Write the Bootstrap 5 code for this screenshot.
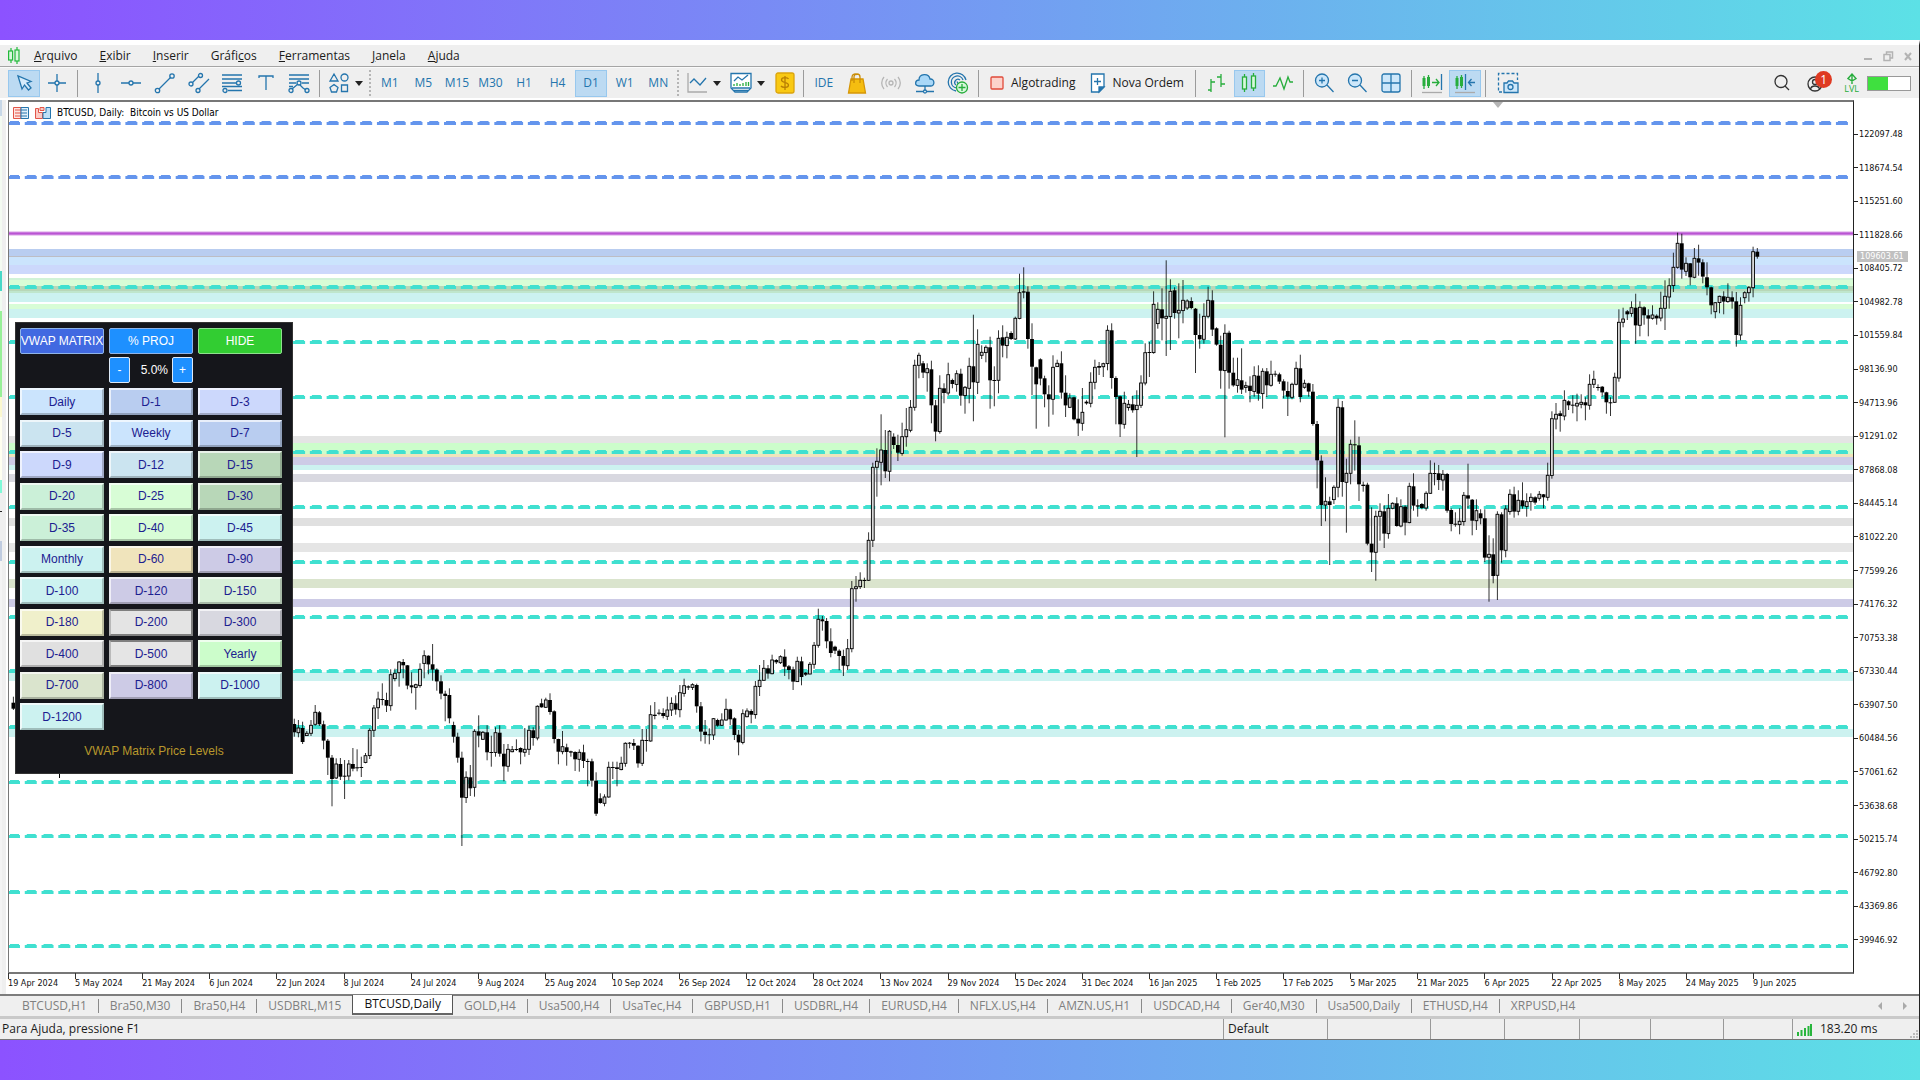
<!DOCTYPE html>
<html lang="pt-BR">
<head>
<meta charset="utf-8">
<meta name="viewport" content="width=device-width, initial-scale=1">
<title>BTCUSD,Daily</title>
<link href="https://cdn.jsdelivr.net/npm/bootstrap@5.3.0/dist/css/bootstrap.min.css" rel="stylesheet">
<style>
:root{--ui:"Open Sans","Noto Sans",sans-serif;--axis:"DejaVu Sans Condensed","DejaVu Sans",sans-serif;--blue:#2475ad;--face:#efefef}
body{font-family:var(--ui);font-size:12px;line-height:16px;color:#1b1b1b;min-height:100vh;background:#fff}
.band{height:40px;background:linear-gradient(90deg,#8c52ff,#5ce1e6)}
.app{border-top:5px solid #fff;border-right:1px solid #222}
.menubar{background:var(--face);height:22px;border-bottom:1px solid #a5a5a5;padding:0 5px 0 6px}
.menubar .menus{gap:22px;margin-left:12px}
.menubar a{color:#1b1b1b;text-decoration:none}
.winctl{gap:8px}
.winctl button{width:12px;height:12px;padding:0;border:0;background:none;display:flex}
.tools{background:var(--face);height:31px;border-top:1px solid #fafafa;padding-left:7px}
.grp{display:flex;height:27px}
.tb{flex:1 1 0;border:1px solid transparent;background:none;padding:0;margin:0 1px;color:var(--blue);display:flex;align-items:center;justify-content:center;font-size:12px;line-height:16px}
.tb.on{background:#bcdaf2;border-color:#98c8ee}
.tb svg,.txtbtn svg{width:22px;height:22px;flex:none;fill:none;stroke:var(--blue);stroke-width:1.3}
.txtbtn{border:0;background:none;padding:0;display:flex;align-items:center;font-size:12px;color:#1b1b1b;gap:3px}
.caret{width:13px;border:0;background:none;padding:0 3px 0 0;display:flex;align-items:center;justify-content:center}
.caret::after{content:"";border:4px solid transparent;border-top:5px solid #222;border-bottom:0}
.vsep{width:1px;height:27px;background:#9b9b9b;margin:0 3px}
.grip{width:2px;height:27px;margin:0 2px;background:repeating-linear-gradient(#b5b5b5 0 2px,transparent 2px 4px)}
.green{stroke:#27ad3c!important}
.w-2{width:67px}.w-3{width:101px}.w-5{width:168px}.w-7{width:235px}.w-9{width:302px}.w-1{width:31px}
.badge-n{left:14px;top:1px;width:17px;height:17px;border-radius:9px;background:#df3a22;color:#fff;font-size:12px;line-height:17px;text-align:center}
.lvl{color:#27ad3c;font-size:9px;line-height:10px}
.battery{width:44px;height:15px;border:1px solid #999;background:linear-gradient(90deg,#3fe03f 47%,#fff 47%)}
.work{border-top:2px solid #fff}
.dock{width:8px;background:
 linear-gradient(90deg,transparent 0 2px,#efefef 2px 6px,#fff 6px),
 linear-gradient(#c8d8e8 0 16px,#f4fbf2 16px 171px,#48d8c8 171px 191px,#f0fbf0 191px 211px,#98f098 211px 297px,#fbf8cf 297px 317px,#fffff0 317px 380px,#80fad8 380px 393px,#efefef 393px 411px,#222 411px 412px,#efefef 412px 441px,#c0cce0 441px 461px,#f4f4f4 461px)}
.plot{border:1px solid #222;border-top:2px solid #777;border-bottom:2px solid #777;border-left-color:#777;min-height:500px}
.plot svg.chart{position:absolute;inset:0;width:100%;height:100%}
.plot-title{left:4px;top:3px;font-family:var(--axis);font-size:10px;gap:6px;color:#000}
.shift-mark{right:350px;top:0;border:5px solid transparent;border-top:6px solid #b5b5b5;border-bottom:0}
.prices{width:65px;padding:28px 0 48px;font:9px/12px var(--axis);color:#111}
.prices span{display:flex;align-items:center;gap:1px}
.prices span::before{content:"";width:4px;height:1px;background:#222}
.now{left:3px;top:151px;width:51px;background:#c0c0c0;color:#fff;font:9px/11px var(--axis);padding-left:3px}
.dates{display:grid;grid-template-columns:repeat(27,1fr);padding:0 34px 0 0;height:20px;font:9px/12px var(--axis);color:#111}
.dates span{white-space:nowrap;padding-top:3px;position:relative;width:0}
.dates span::before{content:"";position:absolute;left:0;top:-1px;width:1px;height:6px;background:#333}
.panel{left:6px;top:220px;width:278px;height:452px;background:#15161b;border:1px solid #333;padding:5px 4px 4px;font-family:"Liberation Sans",Arial,sans-serif;font-size:12px}
.panel button{font-size:12px;line-height:14px;padding:0;height:27px;white-space:nowrap;overflow:hidden}
.cols{display:grid;grid-template-columns:repeat(3,84px);column-gap:5px}
.head button{height:26px;color:#fff;border:1px solid #8fb4e8;border-radius:2px;display:flex;justify-content:center;align-items:center}
.head .hide{border-color:#8ee08e}
.head .step{width:21px;border-color:#dce9f8}
.steprow{margin-top:3px}
.levels{height:342px;align-content:space-between;margin-top:5px}
.levels button{border:2px solid;border-color:#ffffffb0 #00000038 #00000038 #ffffffb0;color:#1c2090}
.levels button.in{border-color:#00000070 #00000070 #00000070 #00000030}
.panel-foot{color:#b8982c;margin-top:13px}
.tabsrow{background:var(--face);border-top:2px solid #7d7d7d;height:22px;padding-left:11px}
.tabsrow a{color:#808080;text-decoration:none;padding:0 11px;height:14px;line-height:14px;border-right:1px solid #8a8a8a}
.tabsrow a:last-of-type{border:0}
.tabsrow a.now-tab{background:#fff;color:#111;height:20px;line-height:18px;margin:-2px 0 0 -1px;padding:0 11px;border:1px solid #555;border-top:0;border-bottom:2px solid #666}
.statusrow{background:var(--face);border-top:3px solid #c9c9c9;border-bottom:1px solid #777;height:24px;padding-left:2px}
.statusrow .cell{border-left:1px solid #999;height:20px;line-height:20px}
</style>
<script src="https://cdn.jsdelivr.net/npm/bootstrap@5.3.0/dist/js/bootstrap.bundle.min.js"></script>
</head>
<body class="d-flex flex-column">
<div class="band"></div>
<div class="app d-flex flex-column flex-grow-1">

<header class="menubar d-flex align-items-center">
 <svg width="16" height="18" viewBox="0 0 16 18" fill="#d9f7dc" stroke="#22b93a" stroke-width="1.2"><path d="M5 1v3M5 13v3M11 0v3M11 14v3"/><rect x="2.6" y="4" width="4" height="9"/><rect x="9" y="3" width="4" height="11"/></svg>
 <nav class="menus d-flex">
  <a href="#"><u>A</u>rquivo</a><a href="#"><u>E</u>xibir</a><a href="#"><u>I</u>nserir</a><a href="#">Gráfi<u>c</u>os</a><a href="#"><u>F</u>erramentas</a><a href="#"><u>J</u>anela</a><a href="#"><u>A</u>juda</a>
 </nav>
 <div class="winctl d-flex ms-auto">
  <button aria-label="Minimizar"><svg width="12" height="12" stroke="#b3b3b3" stroke-width="2"><path d="M2 9h8"/></svg></button>
  <button aria-label="Restaurar"><svg width="12" height="12" fill="none" stroke="#b3b3b3" stroke-width="1.5"><path d="M2 4.500h6v6H2zM4.500 4V2h6v6H8"/></svg></button>
  <button aria-label="Fechar"><svg width="12" height="12" stroke="#b3b3b3" stroke-width="2"><path d="M3 3l6 7M9 3l-6 7"/></svg></button>
 </div>
</header>

<div class="tools d-flex align-items-center">
 <div class="grp w-2">
  <button class="tb on" aria-label="Cursor"><svg viewBox="0 0 22 22"><path fill="#d5ebfb" d="M5 4l4 13 2.500-4 4 5 2.500-2-4-5 4-1.500z"/></svg></button>
  <button class="tb" aria-label="Mira"><svg viewBox="0 0 22 22"><path d="M11 2v7M11 13v7M2 11h7M13 11h7"/><circle cx="11" cy="11" r="2"/></svg></button>
 </div><i class="vsep"></i>
 <div class="grp w-7">
  <button class="tb" aria-label="Linha vertical"><svg viewBox="0 0 22 22"><path d="M11 1v8M11 13v8"/><circle cx="11" cy="11" r="2"/></svg></button>
  <button class="tb" aria-label="Linha horizontal"><svg viewBox="0 0 22 22"><path d="M1 11h8M13 11h8"/><circle cx="11" cy="11" r="2"/></svg></button>
  <button class="tb" aria-label="Tendência"><svg viewBox="0 0 22 22"><path d="M5 17L17 5"/><circle cx="18" cy="4" r="2.200"/><circle cx="3.500" cy="18.500" r="2.200"/></svg></button>
  <button class="tb" aria-label="Canal"><svg viewBox="0 0 22 22"><path d="M4 11L11 4M11 17L21 7"/><circle cx="12.500" cy="3.500" r="2"/><circle cx="3" cy="12" r="2"/><circle cx="10" cy="18.500" r="2"/></svg></button>
  <button class="tb" aria-label="Fibonacci"><svg viewBox="0 0 22 22"><path d="M1 3h20M1 7h20M1 11h14M1 14.500h20M7 18.500h14"/><circle cx="17.500" cy="11" r="2"/><circle cx="4" cy="18.500" r="2"/></svg></button>
  <button class="tb" aria-label="Texto"><svg viewBox="0 0 22 22"><path d="M4 6V4h14v2M11 4v14"/></svg></button>
  <button class="tb" aria-label="Elliott"><svg viewBox="0 0 22 22"><path d="M1 3h20M1 7h20M1 11h7M14 11h7M4 17l6-5M12 13l3 3 3 2M1 14.500h4"/><circle cx="11" cy="11" r="2"/><circle cx="3" cy="18.500" r="2"/><circle cx="19" cy="18.500" r="2"/></svg></button>
 </div><i class="vsep"></i>
 <div class="grp w-1"><button class="tb" aria-label="Formas"><svg viewBox="0 0 22 22"><path d="M6 2l4 7H2zM6 12.500l4 3-1.500 4.500h-5L2 15.500zM13.500 13h6v6.500h-6z"/><circle cx="16.500" cy="5.500" r="3.500"/></svg></button></div>
 <button class="caret" aria-label="Mais formas"></button>
 <i class="grip"></i>
 <div class="grp w-9">
  <button class="tb">M1</button><button class="tb">M5</button><button class="tb">M15</button><button class="tb">M30</button><button class="tb">H1</button><button class="tb">H4</button><button class="tb on">D1</button><button class="tb">W1</button><button class="tb">MN</button>
 </div>
 <i class="grip"></i>
 <div class="grp w-1"><button class="tb" aria-label="Tipo de gráfico"><svg viewBox="0 0 22 22"><path stroke="#aaa" d="M2 1v19h19"/><path d="M4 11l4-4 6 6 6-7"/></svg></button></div>
 <button class="caret" aria-label="Opções"></button>
 <div class="grp w-1"><button class="tb" aria-label="Indicadores"><svg viewBox="0 0 22 22"><path fill="#fff" d="M1 1.500h20V16l-4 4H5l-4-4z"/><path d="M4 9l4-4 4 3 6-5M2 16h18M4 18.500h14"/><path class="green" d="M4 14v-2M7 14v-3M10 14v-2M13 14v-3M16 14v-4M18.500 14v-4"/></svg></button></div>
 <button class="caret" aria-label="Opções"></button>
 <div class="grp w-1"><button class="tb" aria-label="Depósito"><svg viewBox="0 0 22 22"><rect x="2" y="1" width="18" height="20" rx="2" fill="#f9c913" stroke="#dba40c"/><path stroke="#b87e04" d="M14.500 7c-1-1.800-7-2-7 1s7 2 7 5-6 3-7.500 1M11 4v14"/></svg></button></div>
 <i class="vsep"></i>
 <div class="grp w-5">
  <button class="tb">IDE</button>
  <button class="tb" aria-label="Loja"><svg viewBox="0 0 22 22"><path fill="#f5bd10" stroke="#d69606" d="M5 7h12l2.500 14h-17z"/><path stroke="#c98d08" d="M8 11V5c0-4 6-4 6 0v6M6 9V5c0-3 4-4 5-2"/></svg></button>
  <button class="tb" aria-label="Sinais"><svg viewBox="0 0 22 22" style="stroke:#b5b5b5"><circle cx="11" cy="11" r="2"/><path d="M7.500 7a6 6 0 000 8M14.500 7a6 6 0 010 8M4 5a9 9 0 000 12M18 5a9 9 0 010 12"/></svg></button>
  <button class="tb" aria-label="Nuvem"><svg viewBox="0 0 22 22"><path fill="#a9d8f8" d="M5 14c-5 0-4-6 0-6 0-7 10-7 11-1 5-.5 5 7 1 7z"/><path d="M11 14v5M2 19.500h18"/><circle cx="11" cy="19.500" r="1.500" fill="#fff"/></svg></button>
  <button class="tb" aria-label="VPS"><svg viewBox="0 0 22 22"><path d="M9 19A9 9 0 1119 8M10 16a6 6 0 116-8M9 13a3 3 0 114-5M10 9.500l2 4"/><circle cx="15" cy="15.500" r="5.500" fill="#d8f8dc" class="green"/><path class="green" d="M15 12v7M11.500 15.500h7"/></svg></button>
 </div><i class="vsep"></i>
 <button class="txtbtn ms-1"><svg viewBox="0 0 22 22"><rect x="5" y="5" width="12" height="12" rx="1" fill="#fcd2cb" stroke="#e04a3a"/></svg>Algotrading</button>
 <button class="txtbtn ms-2 me-2 ps-1"><svg viewBox="0 0 22 22"><path fill="#fff" d="M4.500 2h12.500v13l-5 5H4.500z"/><path fill="#2475ad" d="M12 20v-5h5z"/><path d="M10.500 6v7M7 9.500h7"/></svg>Nova Ordem</button>
 <i class="vsep"></i>
 <div class="grp w-3">
  <button class="tb" aria-label="Barras"><svg class="green" viewBox="0 0 22 22"><path d="M6 7v13M6 10h4M3 18h3M16 2v13M12 5h4M16 12h4"/></svg></button>
  <button class="tb on" aria-label="Velas"><svg class="green" viewBox="0 0 22 22"><path d="M6.500 2v3M6.500 17v3M15.500 1v3M15.500 16v3"/><rect x="4.500" y="5" width="4" height="12" fill="#d8f8dc"/><rect x="13.500" y="4" width="4" height="12" fill="#d8f8dc"/></svg></button>
  <button class="tb" aria-label="Linha"><svg class="green" viewBox="0 0 22 22"><path d="M1 14l3 0 4-8 4 11 4-12 2 5h3"/></svg></button>
 </div><i class="vsep"></i>
 <div class="grp w-3">
  <button class="tb" aria-label="Ampliar"><svg viewBox="0 0 22 22"><circle cx="9" cy="8.500" r="6.500" fill="#cde7fa"/><path d="M14 13l6.500 7M6 8.500h6M9 5.500v6"/></svg></button>
  <button class="tb" aria-label="Reduzir"><svg viewBox="0 0 22 22"><circle cx="9" cy="8.500" r="6.500" fill="#cde7fa"/><path d="M14 13l6.500 7M6 8.500h6"/></svg></button>
  <button class="tb" aria-label="Janelas"><svg viewBox="0 0 22 22"><rect x="2" y="2" width="18" height="18" rx="2" fill="#cde7fa"/><path d="M11 2v18M2 11h18"/></svg></button>
 </div><i class="vsep"></i>
 <div class="grp w-2">
  <button class="tb" aria-label="Deslocar"><svg viewBox="0 0 22 22"><path stroke="#aaa" d="M1 20.500h20"/><path class="green" d="M3 4v13M7.500 3v13M11 10.500h7M15 7l3 3.500-3 3.500"/><path class="green" style="stroke-width:3" d="M3 6v8M7.500 5v9"/><path d="M20.500 2v16"/></svg></button>
  <button class="tb on" aria-label="Rolagem"><svg viewBox="0 0 22 22"><path stroke="#aaa" d="M1 20.500h20"/><path class="green" d="M3 4v13M7.500 3v13"/><path class="green" style="stroke-width:3" d="M3 6v8M7.500 5v9"/><path d="M11.500 2v16M21 10.500h-6.500M17.500 7l-3 3.500 3 3.500"/></svg></button>
 </div><i class="vsep"></i>
 <div class="grp w-1 ms-1"><button class="tb" aria-label="Captura"><svg viewBox="0 0 22 22"><path stroke-dasharray="3 2" d="M5 20H1.500V1.500h19V8"/><path fill="#cde7fa" d="M7 11h3l1.500-2h4l1.500 2h4v9.500H7z"/><circle cx="13.500" cy="15" r="2.500"/></svg></button></div>
 <div class="d-flex align-items-center ms-auto pe-2">
  <div class="grp w-1"><button class="tb" aria-label="Pesquisar"><svg viewBox="0 0 22 22" style="stroke:#333"><circle cx="10" cy="9.500" r="6"/><path d="M14 14l4 4"/></svg></button></div>
  <div class="grp w-1 position-relative ms-1"><button class="tb" aria-label="Conta"><svg viewBox="0 0 22 22" style="stroke:#333"><circle cx="9" cy="12" r="7"/><circle cx="9" cy="10" r="2.500"/><path d="M4.500 17c1-4 8-4 9 0"/></svg></button><span class="badge-n position-absolute">1</span></div>
  <div class="lvl d-flex flex-column align-items-center ms-2 me-2 ps-1"><svg width="14" height="11" viewBox="0 0 14 11" fill="none" stroke="#27ad3c" stroke-width="1.400"><path d="M7 11V3M3 5.500L7 1l4 4.500L7 8z"/></svg><span>LVL</span></div>
  <div class="battery"></div>
 </div>
</div>

<main class="work d-flex flex-grow-1">
 <div class="dock"></div>
 <div class="d-flex flex-column flex-grow-1">
  <section class="plot position-relative flex-grow-1">
   <svg class="chart" id="chart" viewBox="9 102 1844 870" preserveAspectRatio="none"></svg>
   <div class="plot-title position-absolute d-flex align-items-center">
    <svg width="16" height="12" viewBox="0 0 16 12" fill="#fff"><path fill="#fde5e2" stroke="#e25548" d="M.5.5H8v11H.5zM2 3h6M2 6h6M2 9h6"/><path fill="#e2f1fb" stroke="#2475ad" d="M8 .5h7.500v11H8zM8 3h6M8 6h6M8 9h6"/></svg>
    <svg width="16" height="12" viewBox="0 0 16 12"><path fill="#fbc9c3" stroke="#e25548" d="M.5 1.500h3v4h4v6h-7zM5 .5h4v3H5z"/><path fill="#bfe0f6" stroke="#2475ad" d="M8 11.500v-6h3v-5h4.500v11z"/></svg>
    <span>BTCUSD, Daily:&nbsp; Bitcoin vs US Dollar</span>
   </div>
   <i class="shift-mark position-absolute"></i>
   <aside class="panel position-absolute">
    <div class="cols head">
     <button style="background:#4169e1">VWAP MATRIX</button><button style="background:#1e90ff">% PROJ</button><button class="hide" style="background:#32cd32">HIDE</button>
    </div>
    <div class="cols head steprow">
     <span></span>
     <div class="d-flex align-items-center text-white"><button class="step" style="background:#1e90ff">-</button><span class="ms-auto pe-1">5.0%</span><button class="step" style="background:#1e90ff">+</button></div>
    </div>
    <div class="cols levels" id="levels"></div>
    <div class="panel-foot text-center">VWAP Matrix Price Levels</div>
   </aside>
  </section>
  <div class="dates" id="dates"></div>
 </div>
 <div class="prices d-flex flex-column justify-content-between position-relative" id="prices"><div class="now position-absolute">109603.61</div></div>
</main>

<nav class="tabsrow d-flex align-items-center" id="tabs"></nav>
<footer class="statusrow d-flex align-items-center">
 <span class="flex-grow-1">Para Ajuda, pressione F1</span>
 <span class="cell ps-1" style="width:104px">Default</span><span class="cell" style="width:103px"></span><span class="cell" style="width:74px"></span><span class="cell" style="width:75px"></span><span class="cell" style="width:71px"></span><span class="cell" style="width:73px"></span><span class="cell" style="width:69px"></span>
 <span class="cell d-flex align-items-center ps-1" style="width:127px"><svg class="me-2" width="15" height="13" stroke="#27b53c" stroke-width="2"><path d="M1 13V9M4.500 13V7M8 13V5M11.500 13V3M14 13V1"/></svg>183.20 ms
 <svg class="ms-auto align-self-end" width="10" height="10" fill="#bbb"><path d="M7 1h2v2H7zM7 4h2v2H7zM7 7h2v2H7zM4 4h2v2H4zM4 7h2v2H4zM1 7h2v2H1z"/></svg></span>
</footer>
</div>
<div class="band"></div>

<script>
const el = id => document.getElementById(id);

// Horizontal price zones: top, bottom, colour
const zones = [[249,257,'#b9cdf0'],[257,265,'#cbe4fd'],[265,274,'#ccd8fc'],[278,280,'#d0f3d8'],[280,286,'#d8fdd6'],[286,291,'#b8d7b8'],[291,293,'#bfe6cc'],[293,302,'#ccf2f0'],[304,309,'#d8fdd6'],[309,318,'#ccf2f0'],[436,443,'#e4e4e4'],[443,454,'#ccfdcb'],[454,457,'#f0e4bc'],[457,465,'#cdcbe6'],[465,470,'#ccf2f0'],[474,482,'#d8d8e0'],[518,526,'#e0e0e0'],[543,552,'#e5e5e5'],[579,588,'#dae4cd'],[599,607,'#cdcbe6'],[672,681,'#ccf2f0'],[729,737,'#ccf2f0']];
const projUp = [123,177], projDown = [287,342,397,452,507,562,617,671,727,782,836,892,946];

// Daily candles: high, body top, body bottom, low (thirds of a pixel below `top`), d = down, u = up
const runs = [
{start:1,top:600,bars:'290 308 326 330 d|268 290 308 332 u'},
{start:68,top:580,bars:'416 432 457 470 d|420 444 458 472 u|425 444 486 492 d|453 460 467 468 u|420 436 460 468 u|375 397 433 437 u|393 397 433 438 d|422 433 482 508 d|477 482 533 585 d|525 533 597 679 d|535 552 594 597 u|534 552 590 600 d|540 587 590 657 d|540 552 588 601 u|504 552 566 574 d|508 562 564 574 d|530 561 563 591 d|519 527 547 550 u|445 451 527 537 u|375 384 451 471 u|335 357 383 417 u|310 357 360 376 d|338 360 377 396 d|268 284 377 392 u|266 280 296 304 u|243 246 278 320 u|237 246 256 295 d|255 256 317 328 d|277 316 322 340 d|311 314 322 389 u|250 268 317 323 u|211 227 250 295 u|226 227 253 283 d|192 253 269 302 d|265 269 304 332 d|286 304 341 358 d|332 341 348 424 d|325 345 415 430 d|425 435 470 488 d|458 470 533 548 d|515 533 653 798 d|574 592 653 669 u|555 592 625 648 d|448 454 622 650 u|406 454 467 502 d|453 457 478 480 u|436 457 517 541 d|467 516 518 560 d|442 458 517 530 u|436 458 521 530 d|492 521 559 604 d|492 508 559 575 u|498 509 515 517 u|478 507 509 513 d|502 504 517 553 d|444 508 517 530 u|436 451 508 525 u|442 451 474 497 d|376 379 474 481 u|356 370 382 383 d|353 360 382 384 u|340 360 396 404 d|391 394 477 490 d|476 477 515 553 d|453 500 515 523 u|491 502 516 557 d|512 514 518 530 d|514 516 538 573 d|508 517 538 575 u|494 517 543 564 d|536 543 545 619 d|536 544 602 620 d|577 602 701 708 d|640 655 669 671 d|643 651 670 679 u|545 562 651 653 u|545 561 563 597 d|545 562 567 619 d|530 550 569 571 u|487 490 550 560 u|486 488 490 505 d|477 489 497 510 d|496 497 550 563 d|447 481 550 558 u|447 480 482 515 d|376 404 483 485 u|366 404 408 418 d|388 398 401 406 d|385 399 408 415 d|350 390 409 420 u|352 370 390 408 u|346 370 389 404 d|315 338 389 412 u|296 317 340 350 u|316 319 323 330 d|310 314 322 330 u'},
{start:164,top:640,bars:'131 135 199 218 d|186 199 275 304 d|240 275 285 311 d|265 283 285 313 d|234 236 285 300 u|236 240 257 260 d|220 240 256 258 u|176 208 240 242 u|206 208 238 256 d|232 235 285 300 d|270 284 307 346 d|208 221 307 313 u|205 213 230 232 u|208 213 224 250 d|123 139 224 236 u'},
{start:179,top:240,bars:'1275 1321 1340 1368 u|1260 1285 1321 1322 u|1275 1285 1301 1316 d|1244 1260 1301 1303 u|1257 1260 1267 1272 d|1246 1250 1268 1272 u|1228 1250 1280 1308 d|1275 1279 1290 1318 d|1280 1288 1325 1350 d|1250 1264 1325 1326 u|1250 1264 1311 1336 d|1296 1298 1304 1308 d|1266 1273 1302 1303 u|1206 1216 1273 1286 u|1106 1138 1216 1223 u|1128 1138 1144 1172 d|1134 1143 1204 1225 d|1165 1204 1239 1252 d|1217 1220 1232 1242 d|1228 1232 1248 1291 d|1229 1248 1277 1308 d|1197 1226 1277 1290 u|1023 1046 1226 1237 u|1008 1040 1046 1085 u|997 1021 1040 1047 u|1013 1020 1022 1044 d|877 901 1021 1023 u|668 682 901 921 u|625 664 682 770 u|523 630 667 736 u|570 630 694 714 d|570 574 694 724 u|580 590 615 627 d|584 615 638 663 d|548 590 640 647 u|504 569 590 620 u|480 502 571 577 u|359 376 502 512 u|338 346 376 415 u|363 370 398 414 d|370 386 398 455 u|362 388 496 550 d|480 496 575 604 d|406 445 575 581 u|430 445 459 490 d|368 404 459 467 u|416 420 432 445 d|391 401 433 455 u|386 401 467 497 d|438 442 467 521 u|353 379 445 490 u|224 379 427 544 d|268 313 427 462 u|316 337 346 357 u|316 322 338 367 u|290 322 421 506 d|379 420 422 499 d|271 295 421 460 u|256 292 317 352 d|275 292 317 355 u|274 279 297 300 d|230 235 297 300 u|101 158 235 238 u|82 154 158 175 d|139 155 297 326 d|250 297 380 466 d|380 382 433 566 d|355 358 416 436 d|407 415 463 502 d|436 463 478 560 d|346 382 478 524 u|359 370 380 381 u|334 370 458 476 d|406 458 496 531 d|460 474 502 504 u|470 472 538 541 d|478 536 550 588 d|444 517 550 572 u|481 485 490 494 d|397 427 490 502 u|359 382 427 448 u|366 378 383 405 d'},
{start:261,top:220,bars:'428 431 440 471 u|316 331 431 451 u|310 331 474 506 d|469 474 531 613 d|527 529 613 651 d|515 550 613 626 u|540 553 563 572 u|527 553 571 578 d|511 556 569 711 u|466 489 556 564 u|370 398 489 496 u|366 396 398 471 d|214 253 398 401 u|247 268 311 326 u|205 268 295 361 d|121 289 295 408 u|178 214 290 390 u|202 211 279 296 d|190 271 279 355 u|180 241 272 310 u|238 243 264 270 u|232 243 264 268 d|264 266 345 459 d|281 345 358 386 d|250 289 358 371 u|200 241 289 295 u|211 241 329 348 d|322 325 374 377 d|347 374 452 506 d|313 340 452 652 u|332 338 458 506 d|413 458 496 500 d|413 479 496 518 u|385 481 509 522 d|485 497 502 518 u|469 497 513 547 d|439 467 514 530 u|436 467 521 542 d|445 454 521 566 u|444 454 496 531 d|422 463 496 500 u|452 461 463 470 d|458 463 485 492 d|478 484 512 535 d|485 513 530 588 d|488 493 532 538 u|425 445 493 496 u|404 445 531 547 d|479 490 502 506 u|488 490 515 530 d|492 515 612 617 d|603 612 721 805 d|706 722 855 918 d|772 844 855 904 u|830 844 855 1035 d|796 802 839 852 u|536 562 802 832 u|543 562 786 830 d|716 760 787 938 u|659 673 760 793 u|601 673 676 752 d|650 676 793 843 d|785 794 798 815 d|788 794 971 976 d|862 971 997 1056 d|872 889 997 1082 u|850 874 889 962 u|855 874 941 984 d|822 865 941 956 u|847 850 865 868 u|832 850 918 920 d|838 860 918 922 u|856 860 908 946 d|788 799 908 910 u|760 799 857 872 d|838 856 860 890 d|849 852 864 868 d|814 820 864 872 u|721 760 820 822 u|728 759 761 796 d|735 760 780 810 d|750 763 780 812 u|759 762 872 878 d|865 870 912 934 d|877 911 914 920 d|865 904 914 943 u|816 826 905 917 u|731 826 836 865 d|837 839 902 946 d|838 872 902 930 u|868 880 895 913 d|868 895 1013 1026 d|946 1003 1012 1145 u|955 1003 1068 1090 d|874 883 1066 1140 u'},
{start:356,top:220,bars:'877 883 991 1028 d|856 867 991 1012 u|808 823 875 884 u|800 823 875 893 d|811 841 874 886 u|787 841 859 866 d|820 845 859 890 u|820 832 845 872 u|829 832 848 854 d|813 823 835 842 u|822 823 832 865 d|728 766 832 842 u|574 596 766 776 u|549 583 597 628 u|572 580 588 635 d|511 541 588 601 u|541 544 556 570 d|526 554 556 580 d|521 550 558 604 u|523 547 553 565 u|532 547 556 601 d|463 493 556 569 u|452 478 493 504 u|493 501 503 512 d|498 500 517 530 d|515 517 547 581 d|532 547 549 588 d|458 472 547 549 u|268 307 474 485 u|263 297 307 322 u|270 274 283 300 d|244 263 280 290 u|221 263 316 371 d|244 262 316 349 u|259 262 286 314 d|268 286 296 349 d|256 285 295 299 u|283 287 295 314 d|215 265 294 304 u|181 229 265 330 u|175 197 231 266 u|98 142 197 216 u|38 70 142 146 u|41 70 149 176 d|112 130 154 168 u|129 130 172 196 d|84 115 172 175 u|74 115 128 167 d|118 127 170 190 d|127 172 202 226 d|200 202 256 283 d|246 248 275 295 u|227 229 248 280 u|214 229 245 283 d|190 232 245 248 u|214 232 245 266 d|216 244 345 380 d|232 256 345 361 u|214 218 233 250 u|198 203 218 245 u|80 95 203 232 u|84 95 110 116 d'}];

let out = zones.map(([a,b,c]) => `<rect x="9" y="${a}" width="1844" height="${b-a}" fill="${c}"/>`).join('');
out += '<path d="M9 256.500H1853" stroke="#bdbdc4"/><path d="M9 233.500H1853" stroke="#d9a0e6" stroke-width="4"/><path d="M9 233.500H1853" stroke="#ba55d3" stroke-width="2"/>';
const dashes = (y, c) => `<path d="M8 ${y+.5}H1849" stroke="${c}" stroke-width="3" stroke-dasharray="12 4.770"/><path d="M10 ${y-1.5}H1849" stroke="${c}" stroke-width="1" stroke-dasharray="9 7.770"/>`;
out += projUp.map(y => dashes(y,'#6495ed')).join('') + projDown.map(y => dashes(y,'#40e0d0')).join('');
for (const r of runs) r.bars.split('|').forEach((s, k) => {
  const [h,t,b,l,d] = s.split(' ');
  const x = 9.2 + 4.192 * (r.start + k), y = v => (r.top + v/3).toFixed(1);
  out += `<path d="M${x.toFixed(1)} ${y(h)}V${y(l)}" stroke="#000" stroke-opacity=".8"/>`;
  const hgt = Math.max((b-t)/3, 1).toFixed(1);
  out += d === 'u' && b-t > 4
    ? `<rect x="${(x-1.4).toFixed(1)}" y="${y(t)}" width="2.800" height="${hgt}" fill="#d8d8d8" stroke="#000" stroke-width=".9"/>`
    : `<rect x="${(x-1.9).toFixed(1)}" y="${y(t)}" width="3.800" height="${hgt}"/>`;
});
out += '<path d="M59.500 740V778" stroke="#000"/>';
el('chart').innerHTML = out;

const lv = 'Daily cbe4fd|D-1 b9cdf0|D-3 ccd8fc|D-5 cbe4f0|Weekly cbe4fd|D-7 b9cdf0|D-9 ccd8fc|D-12 cbe4f0|D-15 b8d7b8|D-20 cbf0d8|D-25 d8fdd6|D-30 b8d7b8|D-35 cbf0d8|D-40 d8fdd6|D-45 ccf2f0|Monthly ccf2f0|D-60 f0e4bc|D-90 cdcbe6|D-100 ccf2f0|D-120 cdcbe6|D-150 d8f0d8|D-180 f0f0cb|D-200 e4e4e4|D-300 d8d8e0|D-400 e0e0e0|D-500 e5e5e5|Yearly ccfdcb|D-700 dae4cd|D-800 cdcbe6|D-1000 ccf2f0|D-1200 ccf2f0';
el('levels').innerHTML = lv.split('|').map(s => { const [n,c] = s.split(' ');
  return `<button class="${n==='D-200'||n==='D-500'?'in':''}" style="background:#${c}">${n}</button>`; }).join('');

for (let i = 0; i < 25; i++) el('prices').insertAdjacentHTML('beforeend', `<span>${(122097.48 - i*3422.94).toFixed(2)}</span>`);
el('dates').innerHTML = '19 Apr 2024|5 May 2024|21 May 2024|6 Jun 2024|22 Jun 2024|8 Jul 2024|24 Jul 2024|9 Aug 2024|25 Aug 2024|10 Sep 2024|26 Sep 2024|12 Oct 2024|28 Oct 2024|13 Nov 2024|29 Nov 2024|15 Dec 2024|31 Dec 2024|16 Jan 2025|1 Feb 2025|17 Feb 2025|5 Mar 2025|21 Mar 2025|6 Apr 2025|22 Apr 2025|8 May 2025|24 May 2025|9 Jun 2025'.split('|').map(d => `<span>${d}</span>`).join('');
el('tabs').innerHTML = 'BTCUSD,H1 Bra50,M30 Bra50,H4 USDBRL,M15 BTCUSD,Daily GOLD,H4 Usa500,H4 UsaTec,H4 GBPUSD,H1 USDBRL,H4 EURUSD,H4 NFLX.US,H4 AMZN.US,H1 USDCAD,H4 Ger40,M30 Usa500,Daily ETHUSD,H4 XRPUSD,H4'.split(' ').map(t => `<a href="#" class="${t==='BTCUSD,Daily'?'now-tab':''}">${t}</a>`).join('') +
 '<svg class="ms-auto me-2" width="34" height="8" fill="#aaa"><path d="M5 0v8L1 4zM26 0v8l4-4z"/></svg>';
</script>
</body>
</html>
